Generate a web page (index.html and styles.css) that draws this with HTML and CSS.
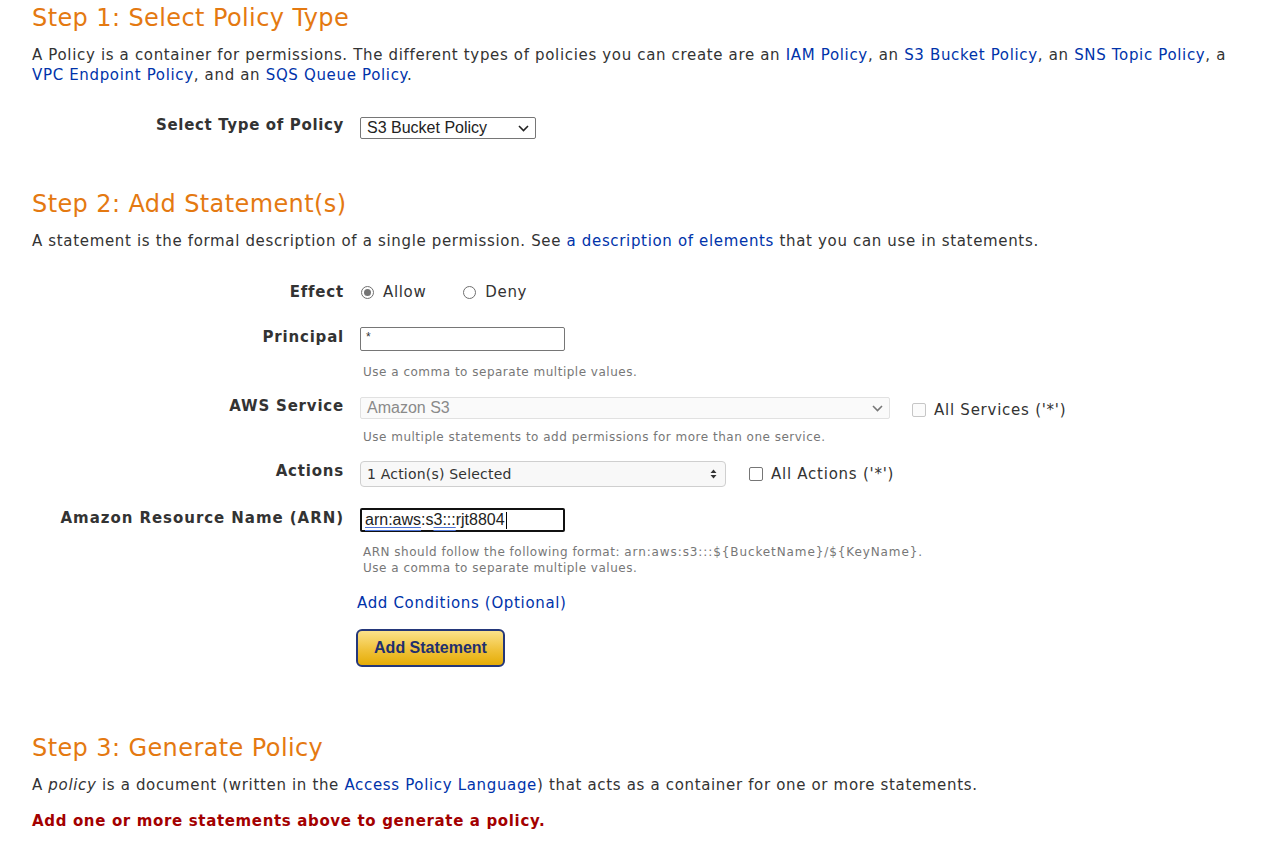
FILE: index.html
```html
<!DOCTYPE html>
<html>
<head>
<meta charset="utf-8">
<link rel="stylesheet" href="styles.css">
</head>
<body>
<main class="page">
  <section class="step">
    <h2 class="step-title">Step 1: Select Policy Type</h2>
    <p class="intro">A Policy is a container for permissions. The different types of policies you can create are an <a href="#">IAM Policy</a>, an <a href="#">S3 Bucket Policy</a>, an <a href="#">SNS Topic Policy</a>, a <a href="#">VPC Endpoint Policy</a>, and an <a href="#">SQS Queue Policy</a>.</p>
    <div class="field field-type">
      <div class="label">Select Type of Policy</div>
      <div class="ctrl">
        <div class="select select-type"><span>S3 Bucket Policy</span>
          <svg class="chev" width="11" height="7" viewBox="0 0 11 7"><path d="M1 1l4.5 4.5L10 1" fill="none" stroke="#222" stroke-width="1.6"/></svg>
        </div>
      </div>
    </div>
  </section>

  <section class="step step2">
    <h2 class="step-title">Step 2: Add Statement(s)</h2>
    <p class="intro">A statement is the formal description of a single permission. See <a href="#">a description of elements</a> that you can use in statements.</p>

    <div class="field field-effect">
      <div class="label">Effect</div>
      <div class="ctrl radios">
        <span class="radio-opt"><span class="radio checked"></span>Allow</span>
        <span class="radio-opt"><span class="radio"></span>Deny</span>
      </div>
    </div>

    <div class="field field-principal">
      <div class="label">Principal</div>
      <div class="ctrl">
        <div class="input input-principal"><span class="star">*</span></div>
        <div class="hint hint-principal">Use a comma to separate multiple values.</div>
      </div>
    </div>

    <div class="field field-service">
      <div class="label">AWS Service</div>
      <div class="ctrl">
        <div class="row">
          <div class="select select-service"><span>Amazon S3</span>
            <svg class="chev" width="11" height="7" viewBox="0 0 11 7"><path d="M1 1l4.5 4.5L10 1" fill="none" stroke="#777" stroke-width="1.6"/></svg>
          </div>
          <label class="check-opt check-services"><span class="checkbox disabled"></span>All Services ('*')</label>
        </div>
        <div class="hint hint-service">Use multiple statements to add permissions for more than one service.</div>
      </div>
    </div>

    <div class="field field-actions">
      <div class="label">Actions</div>
      <div class="ctrl">
        <div class="row">
          <div class="select select-actions"><span>1 Action(s) Selected</span>
            <svg class="updown" width="7" height="10" viewBox="0 0 7 10"><path d="M3.5 0.5L6.5 4H0.5z M3.5 9.5L6.5 6H0.5z" fill="#333"/></svg>
          </div>
          <label class="check-opt check-actions"><span class="checkbox"></span>All Actions ('*')</label>
        </div>
      </div>
    </div>

    <div class="field field-arn">
      <div class="label">Amazon Resource Name (ARN)</div>
      <div class="ctrl">
        <div class="input input-arn"><span class="sp">arn:aws</span>:s<span class="sp">3:::</span>rjt8804<span class="caret"></span></div>
        <div class="hint hint-arn">ARN should follow the following format: <span class="code">arn:aws:s3:::${BucketName}/${KeyName}</span>.<br>Use a comma to separate multiple values.</div>
      </div>
    </div>

    <div class="field field-cond">
      <div class="label"></div>
      <div class="ctrl ctrl-cond">
        <a href="#" class="cond-link">Add Conditions (Optional)</a>
        <button class="btn-add" type="button">Add Statement</button>
      </div>
    </div>
  </section>

  <section class="step step3">
    <h2 class="step-title">Step 3: Generate Policy</h2>
    <p class="intro">A <em>policy</em> is a document (written in the <a href="#">Access Policy Language</a>) that acts as a container for one or more statements.</p>
    <p class="error">Add one or more statements above to generate a policy.</p>
  </section>
</main>
</body>
</html>
```

FILE: styles.css
```css
html, body {
  margin: 0;
  padding: 0;
  background: #fff;
}
body {
  font-family: "DejaVu Sans", Verdana, sans-serif;
  color: #333;
  font-size: 15px;
  letter-spacing: 0.66px;
}
.page {
  padding: 3px 0 0 32px;
}
.step-title {
  margin: 0;
  font-weight: normal;
  font-size: 24px;
  line-height: 30px;
  letter-spacing: 0.4px;
  color: #e47911;
}
.intro {
  margin: 12px 0 0;
  font-size: 15px;
  line-height: 20px;
  padding-right: 40px;
}
a {
  color: #0033aa;
  text-decoration: none;
}
.field {
  display: grid;
  grid-template-columns: 311px 1fr;
  column-gap: 17px;
  align-items: start;
}
.label {
  text-align: right;
  font-weight: bold;
  font-size: 15px;
  line-height: 20px;
  letter-spacing: 0.8px;
  margin-right: -1px;
  color: #333;
}
.ctrl {
  min-width: 0;
}
.row {
  display: flex;
  align-items: center;
}
.field-type { margin-top: 32px; }
.field-type .label { margin-top: -2px; letter-spacing: 0.65px; }
.field-arn .label { letter-spacing: 0.95px; }
.step2 { margin-top: 50px; }
.step3 { margin-top: 66px; }

.select {
  box-sizing: border-box;
  display: flex;
  align-items: center;
  justify-content: space-between;
  font-family: "Liberation Sans", Arial, sans-serif;
  font-size: 16px;
  letter-spacing: 0;
  background: #fff;
}
.select-type {
  width: 176px;
  height: 22px;
  border: 1px solid #767676;
  border-radius: 2px;
  padding: 0 6px 0 6px;
  color: #222;
}
.select-service {
  width: 530px;
  height: 22px;
  border: 1px solid #e1e1e1;
  border-radius: 2px;
  background: #fafafa;
  color: #8a8a8a;
  padding: 0 6px;
}
.select-actions {
  width: 366px;
  height: 26px;
  border: 1px solid #cfcfcf;
  border-radius: 4px;
  background: #f8f8f8;
  color: #333;
  padding: 0 8px 0 6px;
  font-family: "DejaVu Sans", Verdana, sans-serif;
  font-size: 14px;
  letter-spacing: 0.2px;
}

/* effect */
.field-effect { margin-top: 31px; }
.radios {
  display: flex;
  align-items: center;
  height: 20px;
}
.radio-opt {
  display: inline-flex;
  align-items: center;
  font-size: 15px;
}
.radio-opt + .radio-opt { margin-left: 36px; }
.radio {
  box-sizing: border-box;
  width: 13px;
  height: 13px;
  border: 1px solid #6f6f6f;
  border-radius: 50%;
  margin: 0 9px 0 1px;
  position: relative;
  background: #fff;
}
.radio.checked::after {
  content: "";
  position: absolute;
  left: 2px;
  top: 2px;
  width: 7px;
  height: 7px;
  border-radius: 50%;
  background: #757575;
}

/* inputs */
.input {
  box-sizing: border-box;
  width: 205px;
  height: 24px;
  border: 1px solid #767676;
  border-radius: 2px;
  background: #fff;
  font-family: "Liberation Sans", Arial, sans-serif;
  font-size: 16px;
  letter-spacing: 0;
  display: flex;
  align-items: center;
}
.field-principal { margin-top: 25px; }
.input-principal { padding-left: 5px; }
.star {
  font-size: 12px;
  line-height: 1;
  align-self: flex-start;
  margin-top: 3px;
  color: #333;
}
.hint {
  font-size: 12px;
  line-height: 16px;
  letter-spacing: 0.5px;
  color: #777;
  padding-left: 3px;
}
.code { letter-spacing: 0.9px; }
.hint-principal { margin-top: 13px; }

.field-service { margin-top: 17px; }
.field-service .label { margin-top: -1px; }
.hint-service { margin-top: 10px; }
.check-opt {
  display: inline-flex;
  align-items: center;
  font-size: 15px;
  letter-spacing: 0.75px;
  color: #333;
}
.checkbox {
  box-sizing: border-box;
  width: 14px;
  height: 14px;
  border: 1px solid #767676;
  border-radius: 2px;
  background: #fff;
  margin-right: 8px;
}
.checkbox.disabled {
  border-color: #c6c6c6;
  background: #fbfbfb;
}
.check-services { margin-left: 22px; margin-top: 4px; }
.check-actions { margin-left: 23px; }

.field-actions { margin-top: 16px; }

.field-arn { margin-top: 21px; }
.input-arn {
  border: 2px solid #111;
  padding-left: 3px;
  color: #222;
}
.sp {
  text-decoration: underline double #4d73d6;
  text-underline-offset: 2px;
}
.caret {
  display: inline-block;
  width: 1px;
  height: 17px;
  background: #000;
  margin-left: 1px;
}
.hint-arn { margin-top: 12px; }

.field-cond { margin-top: 17px; }
.ctrl-cond {
  display: flex;
  flex-direction: column;
  align-items: flex-start;
  margin-left: -3px;
}
.cond-link {
  font-size: 15px;
  line-height: 20px;
}
.btn-add {
  margin: 16px 0 0 -1px;
  box-sizing: border-box;
  width: 149px;
  height: 38px;
  border: 2px solid #24377a;
  border-radius: 6px;
  background: linear-gradient(#fbe28a, #f0c23a 55%, #e5ac06);
  font-family: "Liberation Sans", Arial, sans-serif;
  font-weight: bold;
  font-size: 16px;
  letter-spacing: 0;
  color: #1f2f6e;
  padding: 0;
  cursor: pointer;
}

.error {
  margin: 16px 0 0;
  font-size: 15px;
  line-height: 20px;
  font-weight: bold;
  letter-spacing: 0.65px;
  color: #a30000;
}
em { font-style: italic; }
```
